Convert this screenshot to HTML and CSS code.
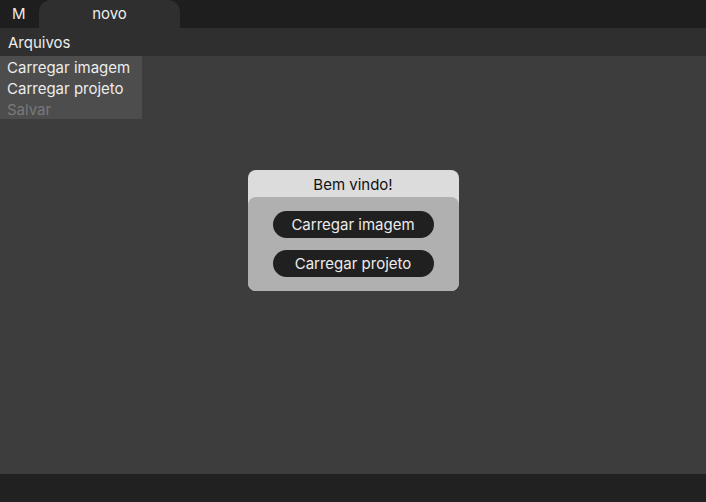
FILE: index.html
```html
<!DOCTYPE html>
<html lang="pt">
<head>
<meta charset="utf-8">
<link rel="stylesheet" href="styles.css">
</head>
<body>
<div class="app">
  <div class="tabbar">
    <div class="logo">M</div>
    <div class="tab">novo</div>
  </div>
  <div class="menubar">
    <div class="menu-title">Arquivos</div>
  </div>
  <div class="workspace">
    <div class="dropdown">
      <div class="item">Carregar imagem</div>
      <div class="item">Carregar projeto</div>
      <div class="item disabled">Salvar</div>
    </div>
    <div class="dialog">
      <div class="dialog-head">Bem vindo!</div>
      <div class="dialog-body">
        <button class="btn">Carregar imagem</button>
        <button class="btn">Carregar projeto</button>
      </div>
    </div>
  </div>
  <div class="statusbar"></div>
</div>
</body>
</html>
```
FILE: styles.css
```css
* { box-sizing: border-box; }
html, body { margin: 0; padding: 0; }
body {
  font-family: Inter, "Noto Sans", sans-serif;
  font-size: 15px;
  color: #ececec;
  background: #3d3d3d;
}
.app {
  width: 706px;
  height: 502px;
  display: flex;
  flex-direction: column;
}
.tabbar {
  height: 28px;
  background: #1e1e1e;
  display: flex;
  align-items: flex-end;
}
.logo {
  width: 39px;
  height: 28px;
  line-height: 28px;
  padding-left: 12px;
}
.tab {
  width: 141px;
  height: 28px;
  line-height: 28px;
  background: #2f2f2f;
  border-radius: 12px 12px 0 0;
  text-align: center;
}
.menubar {
  height: 28px;
  background: #2f2f2f;
  display: flex;
  align-items: center;
  padding-left: 8px;
  padding-top: 1px;
}
.workspace {
  flex: 1;
  position: relative;
  background: #3d3d3d;
  display: flex;
  align-items: flex-start;
  justify-content: center;
  padding-top: 114px;
}
.dropdown {
  position: absolute;
  left: 0;
  top: 0;
  width: 142px;
  height: 63px;
  background: #4d4d4d;
  padding-top: 1px;
}
.item {
  height: 21px;
  line-height: 21px;
  padding-left: 7px;
  color: #ececec;
}
.item.disabled { color: #7a7a7a; }
.dialog {
  width: 211px;
  height: 121px;
  border-radius: 8px;
  background: #dcdcdc;
  overflow: hidden;
  display: flex;
  flex-direction: column;
}
.dialog-head {
  height: 27px;
  line-height: 29px;
  text-align: center;
  color: #111;
}
.dialog-body {
  flex: 1;
  background: #b0b0b0;
  border-radius: 8px 8px 0 0;
  display: flex;
  flex-direction: column;
  align-items: center;
  padding-top: 14px;
  gap: 12px;
}
.btn {
  width: 161px;
  height: 27px;
  border: none;
  border-radius: 14px;
  background: #202020;
  color: #ececec;
  font-family: inherit;
  font-size: 15px;
  padding: 0;
}
.statusbar {
  height: 28px;
  background: #212121;
}
```
